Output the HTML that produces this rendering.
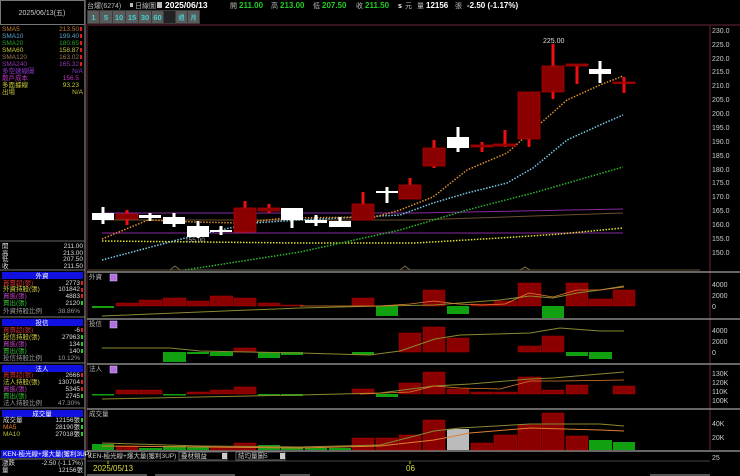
<!DOCTYPE html>
<html><head><meta charset="utf-8"><style>
html,body{margin:0;padding:0;background:#000;width:740px;height:476px;overflow:hidden}
svg text{font-family:"Liberation Sans","Noto Sans CJK TC",sans-serif}
</style></head><body>
<svg width="740" height="476" viewBox="0 0 740 476" xmlns="http://www.w3.org/2000/svg">
<rect width="740" height="476" fill="#000"/>
<rect x="0.5" y="0.5" width="84" height="24" fill="none" stroke="#777"/>
<text x="42" y="15" fill="#ccc" font-size="7" text-anchor="middle">2025/06/13(五)</text>
<line x1="85" y1="0" x2="85" y2="476" stroke="#666" stroke-width="1.5"/>
<g font-size="6.5">
<text x="2" y="31" fill="#c07a28">SMA5</text><text x="79" y="31" fill="#c07a28" text-anchor="end">213.50</text>
<text x="2" y="38" fill="#5aa0cc">SMA10</text><text x="79" y="38" fill="#5aa0cc" text-anchor="end">199.40</text>
<text x="2" y="45" fill="#28a028">SMA20</text><text x="79" y="45" fill="#28a028" text-anchor="end">180.65</text>
<text x="2" y="52" fill="#c8c838">SMA60</text><text x="79" y="52" fill="#c8c838" text-anchor="end">158.87</text>
<text x="2" y="59" fill="#a07858">SMA120</text><text x="79" y="59" fill="#a07858" text-anchor="end">163.02</text>
<text x="2" y="66" fill="#9038b0">SMA240</text><text x="79" y="66" fill="#9038b0" text-anchor="end">165.32</text>
<text x="2" y="73" fill="#9038d0">多空速線圖</text><text x="83" y="73" fill="#9038d0" text-anchor="end">N/A</text>
<text x="2" y="80" fill="#c038c0">散戶成本</text><text x="79" y="80" fill="#c038c0" text-anchor="end">156.5</text>
<text x="2" y="87" fill="#c8c838">多面據線</text><text x="79" y="87" fill="#c8c838" text-anchor="end">93.23</text>
<text x="2" y="94" fill="#c8c838">出場</text><text x="83" y="94" fill="#c8c838" text-anchor="end">N/A</text>
<g fill="#e02020"><rect x="80" y="27" width="2" height="4"/><rect x="80" y="34" width="2" height="4"/><rect x="80" y="41" width="2" height="4"/><rect x="80" y="48" width="2" height="4"/><rect x="80" y="55" width="2" height="4"/><rect x="80" y="62" width="2" height="4"/></g>
</g>
<line x1="0" y1="241" x2="85" y2="241" stroke="#666"/>
<g font-size="6.5" fill="#ddd">
<text x="2" y="248">開</text><text x="83" y="248" text-anchor="end">211.00</text>
<text x="2" y="255">高</text><text x="83" y="255" text-anchor="end">213.00</text>
<text x="2" y="261">低</text><text x="83" y="261" text-anchor="end">207.50</text>
<text x="2" y="268">收</text><text x="83" y="268" text-anchor="end">211.50</text>
</g>
<line x1="0" y1="270" x2="85" y2="270" stroke="#777"/>
<g font-size="6.5">
<rect x="2" y="272" width="81" height="7" fill="#1010e0"/><text x="42" y="278" fill="#fff" text-anchor="middle">外資</text>
<text x="3" y="285" fill="#d03030">買賣超(張)</text><text x="80" y="285" fill="#ddd" text-anchor="end">2773</text>
<text x="3" y="291" fill="#d0d040">外資持股(張)</text><text x="80" y="291" fill="#ddd" text-anchor="end">101842</text>
<text x="3" y="298" fill="#c040c0">買進(張)</text><text x="80" y="298" fill="#ddd" text-anchor="end">4883</text>
<text x="3" y="305" fill="#30c030">賣出(張)</text><text x="80" y="305" fill="#ddd" text-anchor="end">2120</text>
<text x="3" y="313" fill="#999">外資持股比例</text><text x="80" y="313" fill="#999" text-anchor="end">38.86%</text>
<line x1="0" y1="317" x2="85" y2="317" stroke="#777"/>
<rect x="2" y="319" width="81" height="7" fill="#1010e0"/><text x="42" y="325" fill="#fff" text-anchor="middle">投信</text>
<text x="3" y="332" fill="#d03030">買賣超(張)</text><text x="80" y="332" fill="#ddd" text-anchor="end">-6</text>
<text x="3" y="339" fill="#d0d040">投信持股(張)</text><text x="80" y="339" fill="#ddd" text-anchor="end">27963</text>
<text x="3" y="346" fill="#c040c0">買進(張)</text><text x="80" y="346" fill="#ddd" text-anchor="end">134</text>
<text x="3" y="353" fill="#30c030">賣出(張)</text><text x="80" y="353" fill="#ddd" text-anchor="end">140</text>
<text x="3" y="360" fill="#999">投信持股比例</text><text x="80" y="360" fill="#999" text-anchor="end">10.12%</text>
<line x1="0" y1="363" x2="85" y2="363" stroke="#777"/>
<rect x="2" y="365" width="81" height="7" fill="#1010e0"/><text x="42" y="371" fill="#fff" text-anchor="middle">法人</text>
<text x="3" y="377" fill="#d03030">買賣超(張)</text><text x="80" y="377" fill="#ddd" text-anchor="end">2666</text>
<text x="3" y="384" fill="#d0d040">法人持股(張)</text><text x="80" y="384" fill="#ddd" text-anchor="end">130704</text>
<text x="3" y="391" fill="#c040c0">買進(張)</text><text x="80" y="391" fill="#ddd" text-anchor="end">5345</text>
<text x="3" y="398" fill="#30c030">賣出(張)</text><text x="80" y="398" fill="#ddd" text-anchor="end">2745</text>
<text x="3" y="405" fill="#999">法人持股比例</text><text x="80" y="405" fill="#999" text-anchor="end">47.30%</text>
<line x1="0" y1="408" x2="85" y2="408" stroke="#777"/>
<rect x="2" y="410" width="81" height="7" fill="#1010e0"/><text x="42" y="416" fill="#fff" text-anchor="middle">成交量</text>
<text x="3" y="422" fill="#ddd">成交量</text><text x="80" y="422" fill="#ddd" text-anchor="end">12156張</text>
<text x="3" y="429" fill="#e08030">MA5</text><text x="80" y="429" fill="#ddd" text-anchor="end">28190張</text>
<text x="3" y="436" fill="#c0c030">MA10</text><text x="80" y="436" fill="#ddd" text-anchor="end">27018張</text>
<rect x="1" y="450" width="83" height="8" fill="#1010e0"/><text x="3" y="456" fill="#fff">KEN-極光線+爆大量(獲利3UP)</text>
<line x1="0" y1="459" x2="85" y2="459" stroke="#777"/>
<text x="2" y="465" fill="#ddd">漲跌</text><text x="83" y="465" fill="#ddd" text-anchor="end">-2.50 (-1.17%)</text>
<text x="2" y="472" fill="#ddd">量</text><text x="83" y="472" fill="#ddd" text-anchor="end">12156張</text>
</g>
<g fill="#e02020"><rect x="81" y="281" width="2" height="4"/><rect x="81" y="288" width="2" height="4"/><rect x="81" y="294" width="2" height="4"/><rect x="81" y="328" width="2" height="4"/><rect x="81" y="373" width="2" height="4"/><rect x="81" y="380" width="2" height="4"/><rect x="81" y="387" width="2" height="4"/></g>
<g fill="#20d020"><rect x="81" y="301" width="2" height="4"/><rect x="81" y="335" width="2" height="4"/><rect x="81" y="342" width="2" height="4"/><rect x="81" y="349" width="2" height="4"/><rect x="81" y="394" width="2" height="4"/><rect x="81" y="418" width="2" height="4"/><rect x="81" y="425" width="2" height="4"/><rect x="81" y="432" width="2" height="4"/></g>

<g font-size="7">
<text x="87" y="8" fill="#bbb">台燿(6274)</text>
<rect x="130" y="3" width="3" height="4" fill="#bbb"/><text x="135" y="8" fill="#bbb">日線圖</text>
<rect x="157" y="2" width="5" height="6" fill="#bbb"/>
<text x="165" y="8" fill="#fff" font-weight="bold" font-size="8.5">2025/06/13</text>
<text x="230" y="8" fill="#bbb">開</text><text x="239" y="8" fill="#22cc22" font-weight="bold" font-size="8">211.00</text>
<text x="271" y="8" fill="#bbb">高</text><text x="280" y="8" fill="#22cc22" font-weight="bold" font-size="8">213.00</text>
<text x="313" y="8" fill="#bbb">低</text><text x="322" y="8" fill="#22cc22" font-weight="bold" font-size="8">207.50</text>
<text x="356" y="8" fill="#bbb">收</text><text x="365" y="8" fill="#22cc22" font-weight="bold" font-size="8">211.50</text>
<text x="398" y="8" fill="#fff" font-weight="bold">s</text><text x="405" y="8" fill="#bbb">元</text>
<text x="417" y="8" fill="#bbb">量</text><text x="426" y="8" fill="#fff" font-weight="bold" font-size="8">12156</text><text x="455" y="8" fill="#bbb">張</text>
<text x="467" y="8" fill="#fff" font-weight="bold" font-size="8">-2.50 (-1.17%)</text>
</g>
<rect x="87" y="10" width="113" height="14" fill="#3c3c3c"/>
<g fill="#5a5a5a"><rect x="88" y="11" width="11" height="12"/><rect x="100" y="11" width="12" height="12"/><rect x="113" y="11" width="12" height="12"/><rect x="126" y="11" width="12" height="12"/><rect x="139" y="11" width="12" height="12"/><rect x="152" y="11" width="11" height="12"/><rect x="176" y="11" width="11" height="12"/><rect x="188" y="11" width="11" height="12"/></g>
<rect x="164" y="11" width="11" height="12" fill="#222"/>
<g font-size="7.5" fill="#40d0d0" text-anchor="middle" font-weight="bold">
<text x="93.5" y="20">1</text><text x="106" y="20">5</text><text x="119" y="20">10</text><text x="132" y="20">15</text><text x="145" y="20">30</text><text x="157.5" y="20">60</text><text x="181.5" y="20" font-size="6">週</text><text x="193.5" y="20" font-size="6">月</text></g>
<line x1="85" y1="25" x2="740" y2="25" stroke="#6a2838"/>
<line x1="87" y1="26" x2="87" y2="451" stroke="#6a2838"/>
<line x1="710" y1="26" x2="710" y2="451" stroke="#6a2838"/>

<g font-size="7" fill="#ccc">
<text x="712" y="33">230.0</text><text x="712" y="47">225.0</text><text x="712" y="61">220.0</text><text x="712" y="74">215.0</text><text x="712" y="88">210.0</text><text x="712" y="102">205.0</text><text x="712" y="116">200.0</text><text x="712" y="130">195.0</text><text x="712" y="144">190.0</text><text x="712" y="158">185.0</text><text x="712" y="172">180.0</text><text x="712" y="185">175.0</text><text x="712" y="199">170.0</text><text x="712" y="213">165.0</text><text x="712" y="227">160.0</text><text x="712" y="241">155.0</text><text x="712" y="255">150.0</text>
</g>

<polyline points="102,213 415,213 623,209" fill="none" stroke="#8a2aa0" stroke-width="1"/>
<polyline points="102,233 623,233" fill="none" stroke="#8a2aa0" stroke-width="1"/>
<polyline points="102,220 415,220 623,213" fill="none" stroke="#6a5030" stroke-width="1"/>
<g fill="none" stroke-width="1.5" stroke-dasharray="1.5,1.5">
<polyline stroke="#e0e030" points="102,241 300,243 415,243 500,238 560,234 623,228"/>
<polyline stroke="#2eb82e" points="185,270 300,252 400,230 467,210 533,193 623,167"/>
<polyline stroke="#7ac8e8" points="102,260 185,238 252,223 300,220 400,215 433,203 467,193 507,183 533,168 567,140 600,125 623,115"/>
<polyline stroke="#e09030" points="102,239 148,220 195,222 242,223 285,218 375,217 400,210 433,197 467,170 507,153 533,130 567,100 600,85 623,76"/>
</g>
<polyline points="88,270 700,270" stroke="#6a5030" stroke-width="1"/>
<polyline points="170,270 175,266 180,270 400,270 405,266 410,270 520,270 525,267 530,270" fill="none" stroke="#6a6a50" stroke-width="1"/>
<text x="185" y="242" font-size="6.5" fill="#aaa">155.00</text>
<text x="543" y="43" font-size="7" fill="#ddd">225.00</text>

<g>
<g fill="#fff">
<rect x="101.5" y="207" width="3" height="17"/><rect x="92" y="213" width="22" height="7"/>
<rect x="148.5" y="213" width="3" height="8"/><rect x="139" y="215" width="22" height="3"/>
<rect x="172.5" y="213" width="3" height="14"/><rect x="163" y="217" width="22" height="7"/>
<rect x="196.5" y="221" width="3" height="17"/><rect x="187" y="226" width="22" height="11"/>
<rect x="219.5" y="226" width="3" height="9"/><rect x="210" y="230" width="22" height="2"/>
<rect x="290.5" y="208" width="3" height="20"/><rect x="281" y="208" width="22" height="12"/>
<rect x="314.5" y="215" width="3" height="11"/><rect x="305" y="220" width="22" height="3"/>
<rect x="338.5" y="217" width="3" height="10"/><rect x="329" y="221" width="22" height="6"/>
<rect x="385.5" y="187" width="3" height="16"/><rect x="376" y="191" width="22" height="2"/>
<rect x="456.5" y="127" width="3" height="25"/><rect x="447" y="137" width="22" height="11"/>
<rect x="598.5" y="61" width="3" height="22"/><rect x="589" y="69" width="22" height="5"/>
</g>
<g fill="#ee1010">
<rect x="125.5" y="210" width="3" height="15"/><rect x="243.5" y="201" width="3" height="32"/><rect x="267.5" y="204" width="3" height="9"/><rect x="361.5" y="192" width="3" height="28"/><rect x="408.5" y="178" width="3" height="21"/><rect x="432.5" y="140" width="3" height="28"/><rect x="480.5" y="142" width="3" height="10"/><rect x="503.5" y="130" width="3" height="17"/><rect x="527.5" y="92" width="3" height="55"/><rect x="551.5" y="44" width="3" height="55"/><rect x="575.5" y="64" width="3" height="20"/><rect x="622.5" y="77" width="3" height="16"/>
</g>
<g fill="#8a0000" stroke="#b00000" stroke-width="0.8">
<rect x="116" y="214" width="22" height="5"/><rect x="234" y="208" width="22" height="24"/><rect x="258" y="208" width="22" height="3"/><rect x="352" y="204" width="22" height="16"/><rect x="399" y="185" width="22" height="14"/><rect x="423" y="148" width="22" height="18"/><rect x="471" y="145" width="22" height="2"/><rect x="494" y="144" width="22" height="2"/><rect x="518" y="92" width="22" height="47"/><rect x="542" y="66" width="22" height="26"/><rect x="566" y="64" width="22" height="2"/><rect x="613" y="82" width="22" height="1.5"/>
</g>
</g>

<g stroke="#888" stroke-width="1.5">
<line x1="87" y1="272" x2="740" y2="272"/><line x1="87" y1="319" x2="740" y2="319"/><line x1="87" y1="364" x2="740" y2="364"/><line x1="87" y1="409" x2="740" y2="409"/><line x1="87" y1="451" x2="740" y2="451"/>
</g>
<g font-size="6.5" fill="#bbb">
<text x="89" y="279">外資</text><text x="89" y="326">投信</text><text x="89" y="371">法人</text><text x="89" y="416">成交量</text>
</g>
<g fill="#b070e0" stroke="#e0c0ff" stroke-width="0.5"><rect x="110" y="274" width="7" height="7"/><rect x="110" y="321" width="7" height="7"/><rect x="110" y="366" width="7" height="7"/></g>
<g font-size="7" fill="#ccc">
<text x="712" y="287">4000</text><text x="712" y="298">2000</text><text x="712" y="309">0</text>
<text x="712" y="333">4000</text><text x="712" y="344">2000</text><text x="712" y="355">0</text>
<text x="712" y="376">130K</text><text x="712" y="385">120K</text><text x="712" y="394">110K</text><text x="712" y="403">100K</text>
<text x="712" y="426">40K</text><text x="712" y="440">20K</text><text x="712" y="460">25</text>
</g>

<g fill="#8a0000" stroke="#a00" stroke-width="0.5">
<rect x="116" y="303" width="22" height="3"/><rect x="139" y="300" width="23" height="6"/><rect x="163" y="298" width="23" height="8"/><rect x="187" y="301" width="22" height="5"/><rect x="210" y="296" width="23" height="10"/><rect x="234" y="298" width="22" height="8"/><rect x="258" y="303" width="22" height="3"/><rect x="281" y="305" width="22" height="1"/><rect x="352" y="298" width="22" height="8"/><rect x="423" y="290" width="22" height="16"/><rect x="471" y="304" width="22" height="2"/><rect x="494" y="301" width="23" height="5"/><rect x="518" y="283" width="23" height="23"/><rect x="566" y="283" width="22" height="23"/><rect x="589" y="299" width="23" height="7"/><rect x="613" y="290" width="22" height="16"/>
</g>
<g fill="#10a010"><rect x="92" y="306" width="22" height="2"/><rect x="376" y="306" width="22" height="10"/><rect x="447" y="306" width="22" height="8"/><rect x="542" y="306" width="22" height="12"/></g>
<polyline points="102,316 200,312 300,308 380,306 434,305 460,303 500,300 530,296 553,298 577,293 600,290 624,286" fill="none" stroke="#8a8a30" stroke-width="1"/>
<polyline points="300,306 380,306 410,304 434,301 458,304 482,305 505,304 529,293 553,297 577,290 600,290 624,287" fill="none" stroke="#e08030" stroke-width="0.8"/>

<g fill="#10a010"><rect x="163" y="352" width="23" height="10"/><rect x="187" y="352" width="22" height="2"/><rect x="210" y="352" width="23" height="4"/><rect x="258" y="352" width="22" height="6"/><rect x="281" y="352" width="22" height="3"/><rect x="352" y="352" width="22" height="3"/><rect x="566" y="352" width="22" height="4"/><rect x="589" y="352" width="23" height="7"/></g>
<g fill="#8a0000" stroke="#a00" stroke-width="0.5"><rect x="234" y="348" width="22" height="4"/><rect x="399" y="333" width="22" height="19"/><rect x="423" y="327" width="22" height="25"/><rect x="447" y="338" width="22" height="14"/><rect x="518" y="346" width="23" height="6"/><rect x="542" y="336" width="22" height="16"/></g>
<polyline points="102,348 170,348 200,351 300,353 370,355 400,351 435,339 460,335 530,333 560,328 600,331 624,331" fill="none" stroke="#8a8a30" stroke-width="1"/>

<g fill="#8a0000" stroke="#a00" stroke-width="0.5"><rect x="116" y="390" width="22" height="4"/><rect x="139" y="390" width="23" height="4"/><rect x="187" y="392" width="22" height="2"/><rect x="210" y="390" width="23" height="4"/><rect x="234" y="387" width="22" height="7"/><rect x="352" y="389" width="22" height="5"/><rect x="399" y="383" width="22" height="11"/><rect x="423" y="372" width="22" height="22"/><rect x="447" y="389" width="22" height="5"/><rect x="471" y="392" width="22" height="2"/><rect x="494" y="392" width="23" height="2"/><rect x="518" y="377" width="23" height="17"/><rect x="542" y="390" width="22" height="4"/><rect x="566" y="385" width="22" height="9"/><rect x="613" y="386" width="22" height="8"/></g>
<g fill="#10a010"><rect x="92" y="394" width="22" height="1.5"/><rect x="163" y="394" width="23" height="1.5"/><rect x="258" y="394" width="22" height="2"/><rect x="281" y="394" width="22" height="2"/><rect x="376" y="394" width="22" height="3"/></g>
<polyline points="102,399 200,397 300,395 380,393 434,386 470,384 530,379 553,378 600,374 624,372" fill="none" stroke="#8a8a30" stroke-width="1"/>
<polyline points="360,394 410,392 434,386 460,388 500,389 530,381 560,381 624,380" fill="none" stroke="#e08030" stroke-width="0.8"/>

<g fill="#10a010"><rect x="92" y="444" width="22" height="6"/><rect x="139" y="448" width="23" height="2"/><rect x="163" y="446" width="23" height="4"/><rect x="187" y="447" width="22" height="3"/><rect x="258" y="445" width="22" height="5"/><rect x="281" y="447" width="22" height="3"/><rect x="305" y="448" width="22" height="2"/><rect x="329" y="448" width="22" height="2"/><rect x="589" y="440" width="23" height="10"/><rect x="613" y="442" width="22" height="8"/></g>
<g fill="#8a0000" stroke="#b00" stroke-width="0.5"><rect x="116" y="446" width="22" height="4"/><rect x="210" y="447" width="23" height="3"/><rect x="234" y="443" width="22" height="7"/><rect x="352" y="438" width="22" height="12"/><rect x="376" y="438" width="22" height="12"/><rect x="399" y="435" width="22" height="15"/><rect x="423" y="420" width="22" height="30"/><rect x="471" y="443" width="22" height="7"/><rect x="494" y="435" width="23" height="15"/><rect x="518" y="425" width="23" height="25"/><rect x="542" y="413" width="22" height="37"/><rect x="566" y="436" width="22" height="14"/></g>
<rect x="447" y="429" width="22" height="21" fill="#bbb"/>
<polyline points="102,443 200,446 300,447 380,445 434,431 460,428 530,424 600,424 624,426" fill="none" stroke="#8a8a30" stroke-width="1"/>
<polyline points="102,446 300,448 380,446 434,440 470,433 530,428 600,430 624,431" fill="none" stroke="#e08030" stroke-width="1"/>

<g font-size="6.5" fill="#ccc">
<text x="88" y="458">KEN-極光線+爆大量(獲利3UP)</text>
<rect x="179" y="452" width="48" height="8" fill="#000" stroke="#888" stroke-width="0.7"/><text x="181" y="458">疊材類益</text><rect x="222" y="453" width="5" height="6" fill="#ccc"/>
<rect x="236" y="452" width="49" height="8" fill="#000" stroke="#888" stroke-width="0.7"/><text x="238" y="458">結均量圖5</text><rect x="280" y="453" width="5" height="6" fill="#ccc"/>
</g>
<line x1="87" y1="461" x2="710" y2="461" stroke="#444"/>
<line x1="108" y1="461" x2="108" y2="464" stroke="#cc0"/><line x1="410" y1="461" x2="410" y2="464" stroke="#cc0"/>
<text x="93" y="471" font-size="8" fill="#dddd40">2025/05/13</text>
<text x="406" y="471" font-size="8" fill="#dddd40">06</text>
<g fill="#555"><rect x="87" y="474" width="60" height="2"/><rect x="155" y="474" width="80" height="2"/><rect x="280" y="474" width="30" height="2"/><rect x="650" y="474" width="60" height="2"/></g>
</svg>
</body></html>
